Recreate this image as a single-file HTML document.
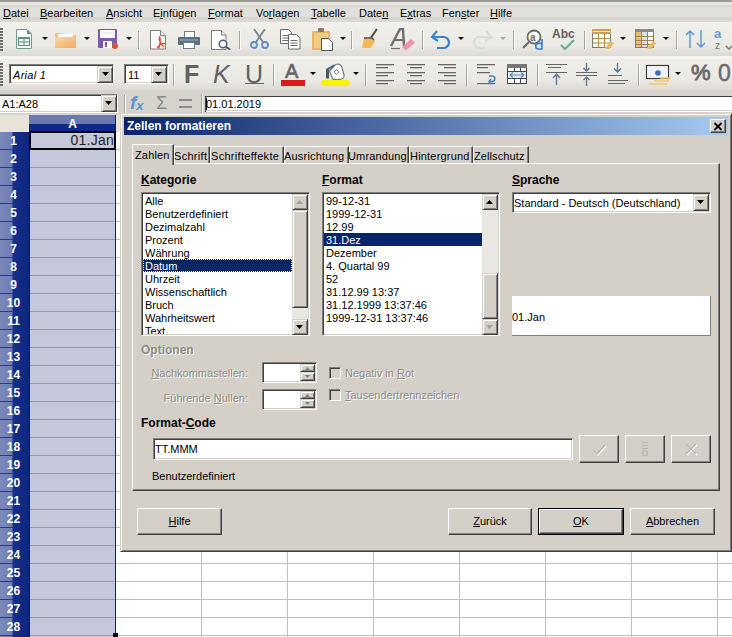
<!DOCTYPE html><html><head><meta charset="utf-8"><style>
*{box-sizing:border-box;margin:0;padding:0}
html,body{width:732px;height:637px;overflow:hidden;background:#fff;position:relative;font-family:"Liberation Sans",sans-serif;font-size:11px;color:#000}
div,svg{position:absolute}
.t{white-space:nowrap;line-height:13px}
.u{text-decoration:underline}
.raised{background:#d4d0c8;border:1px solid;border-color:#fff #404040 #404040 #fff;box-shadow:inset -1px -1px #808080}
.sunken{background:#fff;border:1px solid;border-color:#808080 #fff #fff #808080;box-shadow:inset 1px 1px #404040,inset -1px -1px #d4d0c8}
.sep{width:2px;border-left:1px solid #a8a6a0;border-right:1px solid #fbfaf7}
.dd{width:0;height:0;border-left:3px solid transparent;border-right:3px solid transparent;border-top:3px solid #000}
.dis{color:#8c8a86;text-shadow:1px 1px #fff}
.sb{background:#d4d0c8;border:1px solid;border-color:#d4d0c8 #404040 #404040 #d4d0c8;box-shadow:inset 1px 1px #fff,inset -1px -1px #808080}
.li{position:absolute;white-space:nowrap;line-height:13px;height:13px}
</style></head><body>
<div style="left:0;top:0;width:732px;height:2px;background:#9a9a96"></div>
<div style="left:0;top:2px;width:732px;height:20px;background:linear-gradient(#e5e4e0 0,#e5e4e0 3px,#d8d7d2 3px,#d8d7d2 5px,#e0dfdb 5px,#e0dfdb 15px,#d5d4cf 15px,#d5d4cf 18px,#dad9d4 18px)"></div>
<div style="left:0;top:22px;width:732px;height:34px;background:linear-gradient(#f1f0eb 0,#ebe9e4 70%,#dcd9d2 100%)"></div>
<div style="left:0;top:56px;width:732px;height:3px;background:#f6f5f1"></div>
<div style="left:0;top:59px;width:732px;height:31px;background:linear-gradient(#efeee9 0,#eae8e3 70%,#dedbd4 100%)"></div>
<div style="left:0;top:90px;width:732px;height:25px;background:#d6d3cc"></div>
<div class="t" style="left:3px;top:7px"><u>D</u>atei</div>
<div class="t" style="left:40px;top:7px"><u>B</u>earbeiten</div>
<div class="t" style="left:106px;top:7px"><u>A</u>nsicht</div>
<div class="t" style="left:153px;top:7px">E<u>i</u>nfügen</div>
<div class="t" style="left:208px;top:7px"><u>F</u>ormat</div>
<div class="t" style="left:256px;top:7px">Vo<u>r</u>lagen</div>
<div class="t" style="left:311px;top:7px"><u>T</u>abelle</div>
<div class="t" style="left:359px;top:7px">Date<u>n</u></div>
<div class="t" style="left:400px;top:7px">E<u>x</u>tras</div>
<div class="t" style="left:442px;top:7px">Fen<u>s</u>ter</div>
<div class="t" style="left:490px;top:7px"><u>H</u>ilfe</div>
<div style="left:0;top:28px;width:3px;height:2px;background:#6e6e6c"></div>
<div style="left:0;top:31px;width:3px;height:2px;background:#6e6e6c"></div>
<div style="left:0;top:34px;width:3px;height:2px;background:#6e6e6c"></div>
<div style="left:0;top:37px;width:3px;height:2px;background:#6e6e6c"></div>
<div style="left:0;top:40px;width:3px;height:2px;background:#6e6e6c"></div>
<div style="left:0;top:43px;width:3px;height:2px;background:#6e6e6c"></div>
<div style="left:0;top:46px;width:3px;height:2px;background:#6e6e6c"></div>
<div style="left:0;top:49px;width:3px;height:2px;background:#6e6e6c"></div>
<div style="left:0;top:63px;width:3px;height:2px;background:#6e6e6c"></div>
<div style="left:0;top:66px;width:3px;height:2px;background:#6e6e6c"></div>
<div style="left:0;top:69px;width:3px;height:2px;background:#6e6e6c"></div>
<div style="left:0;top:72px;width:3px;height:2px;background:#6e6e6c"></div>
<div style="left:0;top:75px;width:3px;height:2px;background:#6e6e6c"></div>
<div style="left:0;top:78px;width:3px;height:2px;background:#6e6e6c"></div>
<div style="left:0;top:81px;width:3px;height:2px;background:#6e6e6c"></div>
<div style="left:0;top:84px;width:3px;height:2px;background:#6e6e6c"></div>
<svg style="left:16px;top:29px" width="17" height="21" viewBox="0 0 17 21"><path d="M0.5 0.5h10.5l4.5 4.5v14.5h-15z" fill="#fbfdfc" stroke="#6e9c8c"/><path d="M11 0.5l4.5 4.5h-4.5z" fill="#5f8f7d"/><rect x="2.5" y="8.5" width="11" height="8" fill="#eef6f2" stroke="#5f8f7d"/><rect x="2" y="8" width="12" height="2" fill="#5f8f7d"/><path d="M2.5 13h11M8 10v6.5" stroke="#5f8f7d"/></svg>
<div class="dd" style="left:42px;top:37px"></div>
<svg style="left:55px;top:32px" width="22" height="17" viewBox="0 0 22 17"><defs><linearGradient id="fg" x1="0" y1="0" x2="1" y2="1"><stop offset="0" stop-color="#f8dca0"/><stop offset="1" stop-color="#f0a868"/></linearGradient></defs><path d="M0 1h7l2 2h12v13H0z" fill="#efc383"/><rect x="3" y="2" width="15" height="6" fill="#fff"/><path d="M0 5h21v11H0z" fill="url(#fg)"/></svg>
<div class="dd" style="left:84px;top:37px"></div>
<svg style="left:98px;top:29px" width="21" height="20" viewBox="0 0 21 20"><rect x="0" y="0" width="19" height="19" rx="1" fill="#7b5aa6"/><rect x="2" y="1" width="15" height="8" fill="#fbf9fd"/><path d="M3 4h13" stroke="#e6dcef"/><rect x="5" y="12" width="9" height="7" fill="#fbf9fd"/><rect x="7" y="13" width="2" height="5" fill="#7b5aa6"/><circle cx="17" cy="17" r="3" fill="#d9553a"/></svg>
<div class="dd" style="left:126px;top:37px"></div>
<div class="sep" style="left:138px;top:31px;height:18px"></div>
<svg style="left:150px;top:30px" width="19" height="20" viewBox="0 0 19 20"><path d="M0.5 0.5h10l5 5v13.5h-15z" fill="#fff" stroke="#7d7d7d"/><path d="M10.5 0.5v5h5" fill="#f2f2f2" stroke="#7d7d7d"/><path d="M10 6c-1.5 3-0.5 7 4 11M7 18c2-3 5-5 9-4.5M8.5 18.5c1.5-3 2-7 1.5-11" stroke="#e04a2a" stroke-width="1.3" fill="none"/></svg>
<svg style="left:178px;top:31px" width="22" height="18" viewBox="0 0 22 18"><rect x="6.5" y="0.5" width="10" height="6" fill="#fff" stroke="#6d7f8e"/><rect x="0" y="6" width="22" height="8" rx="1" fill="#5d7080"/><rect x="2" y="8" width="18" height="2" fill="#7f93a3"/><rect x="5.5" y="11.5" width="11" height="6" fill="#fff" stroke="#6d7f8e"/></svg>
<svg style="left:211px;top:30px" width="21" height="20" viewBox="0 0 21 20"><path d="M0.5 0.5h10l4.5 4.5v14.5h-14.5z" fill="#fff" stroke="#7d7d7d"/><path d="M10.5 0.5v4.5h4.5" fill="#f2f2f2" stroke="#7d7d7d"/><circle cx="12" cy="14" r="3.8" fill="#f4f8fb" stroke="#4d5f70" stroke-width="1.5"/><path d="M14.8 16.8l4.5 3" stroke="#4d5f70" stroke-width="1.8"/></svg>
<div class="sep" style="left:239px;top:31px;height:18px"></div>
<svg style="left:249px;top:29px" width="21" height="21" viewBox="0 0 21 21"><path d="M5 0l9 13M16 0L7 13" stroke="#77828c" stroke-width="1.8"/><circle cx="5" cy="16" r="3" fill="none" stroke="#5d8ec4" stroke-width="1.8"/><circle cx="16" cy="16" r="3" fill="none" stroke="#5d8ec4" stroke-width="1.8"/></svg>
<svg style="left:280px;top:29px" width="21" height="21" viewBox="0 0 21 21"><path d="M0.5 0.5h8l3 3v11h-11z" fill="#fff" stroke="#6a6a6a"/><path d="M2.5 6.5h6M2.5 9h6M2.5 11.5h6" stroke="#6a6a6a"/><path d="M8.5 5.5h8l3.5 3.5v11h-11.5z" fill="#fff" stroke="#6a6a6a"/><path d="M10.5 11.5h7M10.5 14h7M10.5 16.5h7" stroke="#6a6a6a"/></svg>
<svg style="left:312px;top:28px" width="23" height="23" viewBox="0 0 23 23"><rect x="0" y="3" width="18" height="19" fill="#e6b864"/><path d="M2 5h14v15H2z" fill="#efcb86"/><rect x="6" y="0" width="6" height="4" rx="1" fill="#8a7a60"/><path d="M9.5 10.5h7l4 4v8h-11z" fill="#fff" stroke="#555"/></svg>
<div class="dd" style="left:340px;top:37px"></div>
<div class="sep" style="left:351px;top:31px;height:18px"></div>
<svg style="left:361px;top:28px" width="18" height="21" viewBox="0 0 18 21"><path d="M16 1L9 11" stroke="#4a4a4a" stroke-width="2"/><path d="M3 10l7 0 4 3-4 7H1z" fill="#f2b95a"/><path d="M3 10h8l2 2" fill="none" stroke="#555" stroke-width="1.6"/></svg>
<svg style="left:389px;top:28px" width="27" height="22" viewBox="0 0 27 22"><path d="M2 18L11 1h3l1 17" fill="none" stroke="#6f6f6f" stroke-width="2.4"/><path d="M6 12h9" stroke="#6f6f6f" stroke-width="2"/><path d="M2 20.5h9" stroke="#6f6f6f" stroke-width="1.2"/><path d="M13 19l9-8 4 3.5-9 8z" fill="#f090b0"/></svg>
<div class="sep" style="left:422px;top:31px;height:18px"></div>
<svg style="left:430px;top:29px" width="23" height="21" viewBox="0 0 23 21"><path d="M7 2L2 8l6 4" fill="none" stroke="#3a82cc" stroke-width="2.2"/><path d="M2.5 8h11a5.5 5.5 0 0 1 0 11H7" fill="none" stroke="#3a82cc" stroke-width="2.2"/></svg>
<div class="dd" style="left:458px;top:37px"></div>
<svg style="left:471px;top:29px" width="22" height="21" viewBox="0 0 22 21"><path d="M15 2l5 6-6 4" fill="none" stroke="#dcdad4" stroke-width="2.2"/><path d="M19.5 8h-11a5.5 5.5 0 0 0 0 11H14" fill="none" stroke="#dcdad4" stroke-width="2.2"/></svg>
<div class="dd" style="left:500px;top:37px;border-top-color:#a8a6a0"></div>
<div class="sep" style="left:513px;top:31px;height:18px"></div>
<svg style="left:521px;top:28px" width="24" height="23" viewBox="0 0 24 23"><circle cx="13" cy="9" r="6.5" fill="#fff" stroke="#6a6a6a" stroke-width="1.8"/><text x="9" y="13" font-family="Liberation Sans" font-size="10" font-weight="bold" fill="#6a6a6a">a</text><path d="M8 14L2 20" stroke="#6a6a6a" stroke-width="2.2"/><path d="M21 11v10.5M21 21h-3.5a2.8 2.8 0 0 1 0-5.6H21" fill="#dbe8f5" stroke="#3f7fc4" stroke-width="1.6"/></svg>
<svg style="left:552px;top:27px" width="26" height="24" viewBox="0 0 26 24"><text x="0" y="11" font-family="Liberation Sans" font-weight="bold" font-size="12" fill="#5e5e5e">Abc</text><path d="M9 18l4 4 9-9" fill="none" stroke="#68ae90" stroke-width="2.2"/></svg>
<div class="sep" style="left:584px;top:31px;height:18px"></div>
<svg style="left:592px;top:29px" width="23" height="20" viewBox="0 0 23 20"><rect x="0.5" y="0.5" width="18" height="18" fill="#fff" stroke="#7a7a7a"/><rect x="0" y="0" width="19" height="5" fill="#caa055"/><path d="M0.5 2.5h18" stroke="#f4e4c0"/><path d="M0.5 9.5h18M0.5 14h18M6.5 5v14M12.5 5v14" stroke="#b08a48"/><path d="M13 19l6-7 3 2.5-6 7z" fill="#e8b860"/></svg>
<div class="dd" style="left:620px;top:37px"></div>
<svg style="left:635px;top:29px" width="22" height="20" viewBox="0 0 22 20"><rect x="0.5" y="0.5" width="18" height="18" fill="#fff" stroke="#7a7a7a"/><rect x="0" y="0" width="19" height="3" fill="#8a8a8a"/><rect x="1" y="3" width="11" height="15" fill="#e6c078"/><rect x="7" y="3" width="5" height="15" fill="#cfe4f4"/><path d="M0.5 7.5h18M0.5 11.5h18M0.5 15.5h18M6.5 3v16M12.5 3v16" stroke="#a8843e"/><path d="M12 19l6-7 3 2.5-6 7z" fill="#e8b860"/></svg>
<div class="dd" style="left:663px;top:37px"></div>
<div class="sep" style="left:676px;top:31px;height:18px"></div>
<svg style="left:685px;top:29px" width="22" height="20" viewBox="0 0 22 20"><path d="M5 19V2M1 6l4-4 4 4" fill="none" stroke="#5d9ad6" stroke-width="1.5"/><path d="M16 1v17M12 14l4 4 4-4" fill="none" stroke="#5d9ad6" stroke-width="1.5"/></svg>
<svg style="left:713px;top:27px" width="19" height="24" viewBox="0 0 19 24"><text x="1" y="11" font-family="Liberation Sans" font-size="13" font-weight="bold" fill="#5d9ad6">a</text><text x="2" y="22" font-family="Liberation Sans" font-size="10" fill="#777">z</text><path d="M13 19l3 3 3-3" fill="none" stroke="#777" stroke-width="1.4"/></svg>
<div class="sunken" style="left:9px;top:64px;width:105px;height:20px"></div>
<div class="t" style="left:13px;top:69px;font-style:italic;letter-spacing:0.3px">Arial 1</div>
<div class="sb" style="left:97px;top:66px;width:16px;height:17px"></div>
<svg style="left:102px;top:72px" width="7" height="4"><polygon points="0,0 7,0 3.5,4" fill="#000"/></svg>
<div class="sunken" style="left:124px;top:64px;width:45px;height:20px"></div>
<div class="t" style="left:128px;top:69px">11</div>
<div class="sb" style="left:151px;top:66px;width:16px;height:17px"></div>
<svg style="left:155px;top:72px" width="7" height="4"><polygon points="0,0 7,0 3.5,4" fill="#000"/></svg>
<div class="sep" style="left:173px;top:64px;height:22px"></div>
<div class="t" style="left:184px;top:60px;font-size:25px;line-height:28px;font-weight:bold;color:#626262">F</div>
<div class="t" style="left:213px;top:60px;font-size:25px;line-height:28px;font-style:italic;color:#626262">K</div>
<div class="t" style="left:245px;top:60px;font-size:25px;line-height:28px;color:#626262">U</div>
<div style="left:245px;top:83px;width:19px;height:1px;background:#626262"></div>
<div class="sep" style="left:273px;top:64px;height:22px"></div>
<div class="t" style="left:285px;top:60px;font-size:20px;line-height:22px;color:#666;-webkit-text-stroke:0.6px #666">A</div>
<div style="left:281px;top:80px;width:24px;height:6px;background:#d81c1c"></div>
<div class="dd" style="left:310px;top:72px"></div>
<svg style="left:324px;top:63px" width="22" height="17" viewBox="0 0 22 17"><path d="M2 6L6 1h6v6z" fill="#d5e6f4"/><path d="M11.5 1.5c3-1 5.5 0 6.5 3l2 7.5c0.5 3-2 4.5-5 4.5H9L5.5 8z" fill="#fff" stroke="#7a7a7a" stroke-width="1.2"/><path d="M12.5 6.5l2.5 2.5-2.5 2.5-2.5-2.5z" fill="none" stroke="#888"/><path d="M3.5 6v9.5" stroke="#44546a" stroke-width="3"/><path d="M3 6.5l7-4" stroke="#44546a" stroke-width="1.6"/></svg>
<div style="left:321px;top:80px;width:29px;height:6px;background:#f6f200;border-radius:3px"></div>
<div class="dd" style="left:353px;top:72px"></div>
<div class="sep" style="left:365px;top:64px;height:22px"></div>
<div style="left:376px;top:64px;width:18px;height:1px;background:#666"></div>
<div style="left:376px;top:65px;width:18px;height:1px;background:#c8c6c0"></div>
<div style="left:376px;top:67px;width:12px;height:1px;background:#666"></div>
<div style="left:376px;top:68px;width:12px;height:1px;background:#c8c6c0"></div>
<div style="left:376px;top:72px;width:18px;height:1px;background:#666"></div>
<div style="left:376px;top:73px;width:18px;height:1px;background:#c8c6c0"></div>
<div style="left:376px;top:75px;width:12px;height:1px;background:#666"></div>
<div style="left:376px;top:76px;width:12px;height:1px;background:#c8c6c0"></div>
<div style="left:376px;top:80px;width:18px;height:1px;background:#666"></div>
<div style="left:376px;top:81px;width:18px;height:1px;background:#c8c6c0"></div>
<div style="left:376px;top:83px;width:12px;height:1px;background:#666"></div>
<div style="left:376px;top:84px;width:12px;height:1px;background:#c8c6c0"></div>
<div style="left:407px;top:64px;width:18px;height:1px;background:#666"></div>
<div style="left:407px;top:65px;width:18px;height:1px;background:#c8c6c0"></div>
<div style="left:410px;top:67px;width:12px;height:1px;background:#666"></div>
<div style="left:410px;top:68px;width:12px;height:1px;background:#c8c6c0"></div>
<div style="left:407px;top:72px;width:18px;height:1px;background:#666"></div>
<div style="left:407px;top:73px;width:18px;height:1px;background:#c8c6c0"></div>
<div style="left:410px;top:75px;width:12px;height:1px;background:#666"></div>
<div style="left:410px;top:76px;width:12px;height:1px;background:#c8c6c0"></div>
<div style="left:407px;top:80px;width:18px;height:1px;background:#666"></div>
<div style="left:407px;top:81px;width:18px;height:1px;background:#c8c6c0"></div>
<div style="left:410px;top:83px;width:12px;height:1px;background:#666"></div>
<div style="left:410px;top:84px;width:12px;height:1px;background:#c8c6c0"></div>
<div style="left:438px;top:64px;width:18px;height:1px;background:#666"></div>
<div style="left:438px;top:65px;width:18px;height:1px;background:#c8c6c0"></div>
<div style="left:444px;top:67px;width:12px;height:1px;background:#666"></div>
<div style="left:444px;top:68px;width:12px;height:1px;background:#c8c6c0"></div>
<div style="left:438px;top:72px;width:18px;height:1px;background:#666"></div>
<div style="left:438px;top:73px;width:18px;height:1px;background:#c8c6c0"></div>
<div style="left:444px;top:75px;width:12px;height:1px;background:#666"></div>
<div style="left:444px;top:76px;width:12px;height:1px;background:#c8c6c0"></div>
<div style="left:438px;top:80px;width:18px;height:1px;background:#666"></div>
<div style="left:438px;top:81px;width:18px;height:1px;background:#c8c6c0"></div>
<div style="left:444px;top:83px;width:12px;height:1px;background:#666"></div>
<div style="left:444px;top:84px;width:12px;height:1px;background:#c8c6c0"></div>
<div class="sep" style="left:466px;top:64px;height:22px"></div>
<svg style="left:476px;top:63px" width="21" height="23" viewBox="0 0 21 23"><path d="M1 1.5h18M1 4.5h11M1 9.5h13M1 20.5h18" stroke="#666" stroke-width="1"/><path d="M1 2.5h18M1 5.5h11M1 10.5h13M1 21.5h18" stroke="#ccc" stroke-width="1"/><path d="M13 13h3a2.8 2.8 0 0 1 0 5.6h-2M15 16l-2 2.6 2 2.6" fill="none" stroke="#4a7fc0" stroke-width="1.5"/></svg>
<svg style="left:506px;top:63px" width="22" height="22" viewBox="0 0 22 22"><rect x="1.5" y="1.5" width="19" height="19" fill="#fff" stroke="#444"/><rect x="1" y="1" width="20" height="4" fill="#777"/><rect x="2" y="9" width="18" height="6" fill="#e2eef8"/><path d="M1.5 8.5h19M1.5 15.5h19M8.5 5v4M14.5 5v4M8.5 15v6M14.5 15v6" stroke="#444"/><path d="M4 12h14M4 12l3-2.5M4 12l3 2.5M18 12l-3-2.5M18 12l-3 2.5" stroke="#5a8cc8" stroke-width="1.2" fill="none"/></svg>
<div class="sep" style="left:537px;top:64px;height:22px"></div>
<svg style="left:546px;top:63px" width="22" height="23" viewBox="0 0 22 23"><path d="M0 1.5h21M2 4.5h13M0 9.5h21" stroke="#666"/><path d="M10.5 22V11M7 15l3.5-4 3.5 4" fill="none" stroke="#5a7a98" stroke-width="1.4"/></svg>
<svg style="left:576px;top:63px" width="22" height="23" viewBox="0 0 22 23"><path d="M0 9.5h21M0 12.5h21" stroke="#666"/><path d="M10.5 0v8M7.5 5l3 3 3-3M10.5 23v-9M7.5 17l3-3 3 3" fill="none" stroke="#5a7a98" stroke-width="1.4"/></svg>
<svg style="left:607px;top:63px" width="22" height="23" viewBox="0 0 22 23"><path d="M1 12.5h14M1 17.5h20M1 20.5h17" stroke="#666"/><path d="M10.5 0v9M7 5.5l3.5 3.5 3.5-3.5" fill="none" stroke="#5a7a98" stroke-width="1.4"/></svg>
<div class="sep" style="left:638px;top:64px;height:22px"></div>
<svg style="left:645px;top:63px" width="27" height="23" viewBox="0 0 27 23"><rect x="1.5" y="2.5" width="22" height="13" fill="#fff" stroke="#3a3a3a" stroke-width="1.2"/><rect x="3" y="4" width="19" height="10" fill="#eef3fa"/><circle cx="13" cy="10" r="2.8" fill="#3f6fae"/><path d="M15 15h11M9 18h15M4 21h18" stroke="#f2c66a" stroke-width="1.4"/></svg>
<div class="dd" style="left:675px;top:72px"></div>
<div class="t" style="left:691px;top:61px;font-size:22px;line-height:24px;color:#6a6a6a;-webkit-text-stroke:0.9px #6a6a6a">%</div>
<div class="t" style="left:718px;top:61px;font-size:23px;line-height:24px;color:#6a6a6a;-webkit-text-stroke:0.5px #6a6a6a">0,</div>
<div class="sunken" style="left:-2px;top:94px;width:120px;height:19px"></div>
<div class="t" style="left:2px;top:98px">A1:A28</div>
<div class="sb" style="left:101px;top:95px;width:16px;height:17px"></div>
<svg style="left:105px;top:101px" width="7" height="4"><polygon points="0,0 7,0 3.5,4" fill="#000"/></svg>
<div class="sep" style="left:124px;top:95px;height:18px"></div>
<div class="t" style="left:130px;top:93px;font-size:19px;line-height:20px;font-style:italic;font-weight:bold;color:#5b95cf">f<span style="font-size:13px;position:relative;top:1px">x</span></div>
<div class="t" style="left:156px;top:93px;font-size:18px;line-height:20px;color:#888">&#931;</div>
<div style="left:179px;top:99px;width:13px;height:2px;background:#8a8a8a"></div>
<div style="left:179px;top:106px;width:13px;height:2px;background:#8a8a8a"></div>
<div class="sep" style="left:201px;top:95px;height:18px"></div>
<div style="left:205px;top:96px;width:540px;height:16px;background:#fff;border-top:1px solid #404040;border-left:1px solid #404040"></div>
<div style="left:206px;top:98px;width:1px;height:12px;background:#000"></div>
<div style="left:206px;top:110px;width:526px;height:1px;background:#d4d0c8"></div>
<div class="t" style="left:206px;top:98px">01.01.2019</div>
<div style="left:0;top:115px;width:29px;height:17px;background:#e7e3d8"></div>
<div style="left:29px;top:115px;width:87px;height:17px;background:linear-gradient(#6b79b1 0,#6b79b1 50%,#0c2a8a 50%,#0c2a8a 100%)"></div>
<div class="t" style="left:29px;top:118px;width:87px;text-align:center;color:#fff;font-weight:bold;font-size:12px">A</div>
<div style="left:116px;top:115px;width:6px;height:17px;background:#e7e3d8"></div>
<div style="left:0;top:132px;width:29px;height:505px;background:linear-gradient(90deg,#7c8aba 0,#6e7cb4 12px,#14308a 13px,#0d2680 100%)"></div>
<div style="left:29px;top:132px;width:1px;height:505px;background:#0a1a5a"></div>
<div style="left:30px;top:132px;width:85px;height:505px;background:#c5c8db"></div>
<div style="left:115px;top:115px;width:1px;height:522px;background:#0c2070"></div>
<div style="left:0;top:149px;width:13px;height:1px;background:#2a3a80"></div>
<div style="left:30px;top:149px;width:85px;height:1px;background:#9698b0"></div>
<div class="t" style="left:-1px;top:135px;width:29px;text-align:center;color:#fff;font-weight:bold;font-size:12px">1</div>
<div style="left:0;top:167px;width:13px;height:1px;background:#2a3a80"></div>
<div style="left:30px;top:167px;width:85px;height:1px;background:#9698b0"></div>
<div class="t" style="left:-1px;top:153px;width:29px;text-align:center;color:#fff;font-weight:bold;font-size:12px">2</div>
<div style="left:0;top:185px;width:13px;height:1px;background:#2a3a80"></div>
<div style="left:30px;top:185px;width:85px;height:1px;background:#9698b0"></div>
<div class="t" style="left:-1px;top:171px;width:29px;text-align:center;color:#fff;font-weight:bold;font-size:12px">3</div>
<div style="left:0;top:203px;width:13px;height:1px;background:#2a3a80"></div>
<div style="left:30px;top:203px;width:85px;height:1px;background:#9698b0"></div>
<div class="t" style="left:-1px;top:189px;width:29px;text-align:center;color:#fff;font-weight:bold;font-size:12px">4</div>
<div style="left:0;top:221px;width:13px;height:1px;background:#2a3a80"></div>
<div style="left:30px;top:221px;width:85px;height:1px;background:#9698b0"></div>
<div class="t" style="left:-1px;top:207px;width:29px;text-align:center;color:#fff;font-weight:bold;font-size:12px">5</div>
<div style="left:0;top:239px;width:13px;height:1px;background:#2a3a80"></div>
<div style="left:30px;top:239px;width:85px;height:1px;background:#9698b0"></div>
<div class="t" style="left:-1px;top:225px;width:29px;text-align:center;color:#fff;font-weight:bold;font-size:12px">6</div>
<div style="left:0;top:257px;width:13px;height:1px;background:#2a3a80"></div>
<div style="left:30px;top:257px;width:85px;height:1px;background:#9698b0"></div>
<div class="t" style="left:-1px;top:243px;width:29px;text-align:center;color:#fff;font-weight:bold;font-size:12px">7</div>
<div style="left:0;top:275px;width:13px;height:1px;background:#2a3a80"></div>
<div style="left:30px;top:275px;width:85px;height:1px;background:#9698b0"></div>
<div class="t" style="left:-1px;top:261px;width:29px;text-align:center;color:#fff;font-weight:bold;font-size:12px">8</div>
<div style="left:0;top:293px;width:13px;height:1px;background:#2a3a80"></div>
<div style="left:30px;top:293px;width:85px;height:1px;background:#9698b0"></div>
<div class="t" style="left:-1px;top:279px;width:29px;text-align:center;color:#fff;font-weight:bold;font-size:12px">9</div>
<div style="left:0;top:311px;width:13px;height:1px;background:#2a3a80"></div>
<div style="left:30px;top:311px;width:85px;height:1px;background:#9698b0"></div>
<div class="t" style="left:-1px;top:297px;width:29px;text-align:center;color:#fff;font-weight:bold;font-size:12px">10</div>
<div style="left:0;top:329px;width:13px;height:1px;background:#2a3a80"></div>
<div style="left:30px;top:329px;width:85px;height:1px;background:#9698b0"></div>
<div class="t" style="left:-1px;top:315px;width:29px;text-align:center;color:#fff;font-weight:bold;font-size:12px">11</div>
<div style="left:0;top:347px;width:13px;height:1px;background:#2a3a80"></div>
<div style="left:30px;top:347px;width:85px;height:1px;background:#9698b0"></div>
<div class="t" style="left:-1px;top:333px;width:29px;text-align:center;color:#fff;font-weight:bold;font-size:12px">12</div>
<div style="left:0;top:365px;width:13px;height:1px;background:#2a3a80"></div>
<div style="left:30px;top:365px;width:85px;height:1px;background:#9698b0"></div>
<div class="t" style="left:-1px;top:351px;width:29px;text-align:center;color:#fff;font-weight:bold;font-size:12px">13</div>
<div style="left:0;top:383px;width:13px;height:1px;background:#2a3a80"></div>
<div style="left:30px;top:383px;width:85px;height:1px;background:#9698b0"></div>
<div class="t" style="left:-1px;top:369px;width:29px;text-align:center;color:#fff;font-weight:bold;font-size:12px">14</div>
<div style="left:0;top:401px;width:13px;height:1px;background:#2a3a80"></div>
<div style="left:30px;top:401px;width:85px;height:1px;background:#9698b0"></div>
<div class="t" style="left:-1px;top:387px;width:29px;text-align:center;color:#fff;font-weight:bold;font-size:12px">15</div>
<div style="left:0;top:419px;width:13px;height:1px;background:#2a3a80"></div>
<div style="left:30px;top:419px;width:85px;height:1px;background:#9698b0"></div>
<div class="t" style="left:-1px;top:405px;width:29px;text-align:center;color:#fff;font-weight:bold;font-size:12px">16</div>
<div style="left:0;top:437px;width:13px;height:1px;background:#2a3a80"></div>
<div style="left:30px;top:437px;width:85px;height:1px;background:#9698b0"></div>
<div class="t" style="left:-1px;top:423px;width:29px;text-align:center;color:#fff;font-weight:bold;font-size:12px">17</div>
<div style="left:0;top:455px;width:13px;height:1px;background:#2a3a80"></div>
<div style="left:30px;top:455px;width:85px;height:1px;background:#9698b0"></div>
<div class="t" style="left:-1px;top:441px;width:29px;text-align:center;color:#fff;font-weight:bold;font-size:12px">18</div>
<div style="left:0;top:473px;width:13px;height:1px;background:#2a3a80"></div>
<div style="left:30px;top:473px;width:85px;height:1px;background:#9698b0"></div>
<div class="t" style="left:-1px;top:459px;width:29px;text-align:center;color:#fff;font-weight:bold;font-size:12px">19</div>
<div style="left:0;top:491px;width:13px;height:1px;background:#2a3a80"></div>
<div style="left:30px;top:491px;width:85px;height:1px;background:#9698b0"></div>
<div class="t" style="left:-1px;top:477px;width:29px;text-align:center;color:#fff;font-weight:bold;font-size:12px">20</div>
<div style="left:0;top:509px;width:13px;height:1px;background:#2a3a80"></div>
<div style="left:30px;top:509px;width:85px;height:1px;background:#9698b0"></div>
<div class="t" style="left:-1px;top:495px;width:29px;text-align:center;color:#fff;font-weight:bold;font-size:12px">21</div>
<div style="left:0;top:527px;width:13px;height:1px;background:#2a3a80"></div>
<div style="left:30px;top:527px;width:85px;height:1px;background:#9698b0"></div>
<div class="t" style="left:-1px;top:513px;width:29px;text-align:center;color:#fff;font-weight:bold;font-size:12px">22</div>
<div style="left:0;top:545px;width:13px;height:1px;background:#2a3a80"></div>
<div style="left:30px;top:545px;width:85px;height:1px;background:#9698b0"></div>
<div class="t" style="left:-1px;top:531px;width:29px;text-align:center;color:#fff;font-weight:bold;font-size:12px">23</div>
<div style="left:0;top:563px;width:13px;height:1px;background:#2a3a80"></div>
<div style="left:30px;top:563px;width:85px;height:1px;background:#9698b0"></div>
<div class="t" style="left:-1px;top:549px;width:29px;text-align:center;color:#fff;font-weight:bold;font-size:12px">24</div>
<div style="left:0;top:581px;width:13px;height:1px;background:#2a3a80"></div>
<div style="left:30px;top:581px;width:85px;height:1px;background:#9698b0"></div>
<div class="t" style="left:-1px;top:567px;width:29px;text-align:center;color:#fff;font-weight:bold;font-size:12px">25</div>
<div style="left:0;top:599px;width:13px;height:1px;background:#2a3a80"></div>
<div style="left:30px;top:599px;width:85px;height:1px;background:#9698b0"></div>
<div class="t" style="left:-1px;top:585px;width:29px;text-align:center;color:#fff;font-weight:bold;font-size:12px">26</div>
<div style="left:0;top:617px;width:13px;height:1px;background:#2a3a80"></div>
<div style="left:30px;top:617px;width:85px;height:1px;background:#9698b0"></div>
<div class="t" style="left:-1px;top:603px;width:29px;text-align:center;color:#fff;font-weight:bold;font-size:12px">27</div>
<div style="left:0;top:635px;width:13px;height:1px;background:#2a3a80"></div>
<div style="left:30px;top:635px;width:85px;height:1px;background:#9698b0"></div>
<div class="t" style="left:-1px;top:621px;width:29px;text-align:center;color:#fff;font-weight:bold;font-size:12px">28</div>
<div style="left:116px;top:563px;width:616px;height:1px;background:#c0c0c0"></div>
<div style="left:116px;top:581px;width:616px;height:1px;background:#c0c0c0"></div>
<div style="left:116px;top:599px;width:616px;height:1px;background:#c0c0c0"></div>
<div style="left:116px;top:617px;width:616px;height:1px;background:#c0c0c0"></div>
<div style="left:116px;top:635px;width:616px;height:1px;background:#c0c0c0"></div>
<div style="left:201px;top:551px;width:1px;height:86px;background:#c0c0c0"></div>
<div style="left:287px;top:551px;width:1px;height:86px;background:#c0c0c0"></div>
<div style="left:373px;top:551px;width:1px;height:86px;background:#c0c0c0"></div>
<div style="left:459px;top:551px;width:1px;height:86px;background:#c0c0c0"></div>
<div style="left:545px;top:551px;width:1px;height:86px;background:#c0c0c0"></div>
<div style="left:631px;top:551px;width:1px;height:86px;background:#c0c0c0"></div>
<div style="left:717px;top:551px;width:1px;height:86px;background:#c0c0c0"></div>
<div style="left:116px;top:149px;width:6px;height:1px;background:#c0c0c0"></div>
<div style="left:116px;top:167px;width:6px;height:1px;background:#c0c0c0"></div>
<div style="left:116px;top:185px;width:6px;height:1px;background:#c0c0c0"></div>
<div style="left:116px;top:203px;width:6px;height:1px;background:#c0c0c0"></div>
<div style="left:116px;top:221px;width:6px;height:1px;background:#c0c0c0"></div>
<div style="left:116px;top:239px;width:6px;height:1px;background:#c0c0c0"></div>
<div style="left:116px;top:257px;width:6px;height:1px;background:#c0c0c0"></div>
<div style="left:116px;top:275px;width:6px;height:1px;background:#c0c0c0"></div>
<div style="left:116px;top:293px;width:6px;height:1px;background:#c0c0c0"></div>
<div style="left:116px;top:311px;width:6px;height:1px;background:#c0c0c0"></div>
<div style="left:116px;top:329px;width:6px;height:1px;background:#c0c0c0"></div>
<div style="left:116px;top:347px;width:6px;height:1px;background:#c0c0c0"></div>
<div style="left:116px;top:365px;width:6px;height:1px;background:#c0c0c0"></div>
<div style="left:116px;top:383px;width:6px;height:1px;background:#c0c0c0"></div>
<div style="left:116px;top:401px;width:6px;height:1px;background:#c0c0c0"></div>
<div style="left:116px;top:419px;width:6px;height:1px;background:#c0c0c0"></div>
<div style="left:116px;top:437px;width:6px;height:1px;background:#c0c0c0"></div>
<div style="left:116px;top:455px;width:6px;height:1px;background:#c0c0c0"></div>
<div style="left:116px;top:473px;width:6px;height:1px;background:#c0c0c0"></div>
<div style="left:116px;top:491px;width:6px;height:1px;background:#c0c0c0"></div>
<div style="left:116px;top:509px;width:6px;height:1px;background:#c0c0c0"></div>
<div style="left:116px;top:527px;width:6px;height:1px;background:#c0c0c0"></div>
<div style="left:116px;top:545px;width:6px;height:1px;background:#c0c0c0"></div>
<div style="left:116px;top:563px;width:6px;height:1px;background:#c0c0c0"></div>
<div style="left:116px;top:581px;width:6px;height:1px;background:#c0c0c0"></div>
<div style="left:116px;top:599px;width:6px;height:1px;background:#c0c0c0"></div>
<div style="left:116px;top:617px;width:6px;height:1px;background:#c0c0c0"></div>
<div style="left:116px;top:635px;width:6px;height:1px;background:#c0c0c0"></div>
<div style="left:29px;top:131px;width:87px;height:19px;border:2px solid #000"></div>
<div class="t" style="left:60px;top:132px;width:54px;text-align:right;font-size:14px;line-height:16px;color:#222;letter-spacing:0.25px">01.Jan</div>
<div style="left:113px;top:633px;width:5px;height:4px;background:#000"></div>
<div style="left:120px;top:113px;width:612px;height:439px;background:#d4d0c8;border:1px solid;border-color:#d4d0c8 #404040 #404040 #d4d0c8;box-shadow:inset 1px 1px #fff,inset -1px -1px #808080"></div>
<div style="left:124px;top:117px;width:604px;height:18px;background:linear-gradient(90deg,#0a246a 0,#a6caf0 100%)"></div>
<div class="t" style="left:127px;top:119px;color:#fff;font-weight:bold;font-size:12px;line-height:14px">Zellen formatieren</div>
<div class="raised" style="left:710px;top:119px;width:16px;height:14px"></div>
<svg style="left:713px;top:122px" width="11" height="9" viewBox="0 0 11 9"><path d="M1.5 1l7 7M8.5 1l-7 7" stroke="#000" stroke-width="1.8"/></svg>
<div style="left:132px;top:163px;width:588px;height:328px;border:1px solid;border-color:#fff #404040 #404040 #fff;box-shadow:inset -1px -1px #808080"></div>
<div style="left:132px;top:144px;width:42px;height:21px;background:#d4d0c8;border-left:1px solid #fff;border-top:1px solid #fff;border-right:1px solid #404040;box-shadow:inset -1px 0 #808080"></div>
<div class="t" style="left:135px;top:149px;letter-spacing:0.15px">Zahlen</div>
<div style="left:174px;top:146px;width:36px;height:17px;background:#d4d0c8;border-top:1px solid #fff;border-left:1px solid #fff;border-right:1px solid #404040;box-shadow:inset -1px 0 #808080"></div>
<div class="t" style="left:174px;top:150px;letter-spacing:0.3px">Schrift</div>
<div style="left:210px;top:146px;width:74px;height:17px;background:#d4d0c8;border-top:1px solid #fff;border-left:1px solid #fff;border-right:1px solid #404040;box-shadow:inset -1px 0 #808080"></div>
<div class="t" style="left:211px;top:150px;letter-spacing:0.3px">Schrifteffekte</div>
<div style="left:284px;top:146px;width:65px;height:17px;background:#d4d0c8;border-top:1px solid #fff;border-left:1px solid #fff;border-right:1px solid #404040;box-shadow:inset -1px 0 #808080"></div>
<div class="t" style="left:284px;top:150px;letter-spacing:0.2px">Ausrichtung</div>
<div style="left:349px;top:146px;width:60px;height:17px;background:#d4d0c8;border-top:1px solid #fff;border-left:1px solid #fff;border-right:1px solid #404040;box-shadow:inset -1px 0 #808080"></div>
<div class="t" style="left:348px;top:150px;letter-spacing:0.15px">Umrandung</div>
<div style="left:409px;top:146px;width:64px;height:17px;background:#d4d0c8;border-top:1px solid #fff;border-left:1px solid #fff;border-right:1px solid #404040;box-shadow:inset -1px 0 #808080"></div>
<div class="t" style="left:410px;top:150px;letter-spacing:0.2px">Hintergrund</div>
<div style="left:473px;top:146px;width:56px;height:17px;background:#d4d0c8;border-top:1px solid #fff;border-left:1px solid #fff;border-right:1px solid #404040;box-shadow:inset -1px 0 #808080"></div>
<div class="t" style="left:474px;top:150px;letter-spacing:0.1px">Zellschutz</div>
<div class="t" style="left:141px;top:174px;font-weight:bold;font-size:12px;"><u>K</u>ategorie</div>
<div class="t" style="left:322px;top:174px;font-weight:bold;font-size:12px;"><u>F</u>ormat</div>
<div class="t" style="left:512px;top:174px;font-weight:bold;font-size:12px;"><u>S</u>prache</div>
<div class="sunken" style="left:141px;top:192px;width:169px;height:144px"></div>
<div style="left:143px;top:194px;width:149px;height:140px;overflow:hidden">
<div class="li" style="left:2px;top:1px">Alle</div>
<div class="li" style="left:2px;top:14px">Benutzerdefiniert</div>
<div class="li" style="left:2px;top:27px">Dezimalzahl</div>
<div class="li" style="left:2px;top:40px">Prozent</div>
<div class="li" style="left:2px;top:53px">Währung</div>
<div style="left:0;top:65px;width:149px;height:13px;background:#0a246a;outline:1px dotted #fff;outline-offset:-1px"></div>
<div class="li" style="left:2px;top:66px;color:#fff">Datum</div>
<div class="li" style="left:2px;top:79px">Uhrzeit</div>
<div class="li" style="left:2px;top:92px">Wissenschaftlich</div>
<div class="li" style="left:2px;top:105px">Bruch</div>
<div class="li" style="left:2px;top:118px">Wahrheitswert</div>
<div class="li" style="left:2px;top:131px">Text</div>
</div>
<div style="left:292px;top:194px;width:16px;height:140px;background:#e9e7e2"></div>
<div class="sb" style="left:292px;top:194px;width:16px;height:16px"></div>
<svg style="left:296px;top:200px" width="7" height="4"><polygon points="0,4 7,4 3.5,0" fill="#a0a0a0"/></svg>
<div class="sb" style="left:292px;top:210px;width:16px;height:98px"></div>
<div class="sb" style="left:292px;top:319px;width:16px;height:16px"></div>
<svg style="left:296px;top:325px" width="7" height="4"><polygon points="0,0 7,0 3.5,4" fill="#000"/></svg>
<div class="sunken" style="left:322px;top:192px;width:178px;height:144px"></div>
<div style="left:324px;top:194px;width:158px;height:140px;overflow:hidden">
<div class="li" style="left:2px;top:1px">99-12-31</div>
<div class="li" style="left:2px;top:14px">1999-12-31</div>
<div class="li" style="left:2px;top:27px">12.99</div>
<div style="left:0;top:39px;width:158px;height:13px;background:#0a246a"></div>
<div class="li" style="left:2px;top:40px;color:#fff">31.Dez</div>
<div class="li" style="left:2px;top:53px">Dezember</div>
<div class="li" style="left:2px;top:66px">4. Quartal 99</div>
<div class="li" style="left:2px;top:79px">52</div>
<div class="li" style="left:2px;top:92px">31.12.99 13:37</div>
<div class="li" style="left:2px;top:105px">31.12.1999 13:37:46</div>
<div class="li" style="left:2px;top:118px">1999-12-31 13:37:46</div>
</div>
<div style="left:482px;top:194px;width:16px;height:140px;background:#e9e7e2"></div>
<div class="sb" style="left:482px;top:194px;width:16px;height:16px"></div>
<svg style="left:486px;top:200px" width="7" height="4"><polygon points="0,4 7,4 3.5,0" fill="#000"/></svg>
<div class="sb" style="left:482px;top:273px;width:16px;height:46px"></div>
<div class="sb" style="left:482px;top:319px;width:16px;height:16px"></div>
<svg style="left:486px;top:325px" width="7" height="4"><polygon points="0,0 7,0 3.5,4" fill="#a0a0a0"/></svg>
<div class="sunken" style="left:512px;top:192px;width:199px;height:21px"></div>
<div class="t" style="left:514px;top:197px;">Standard - Deutsch (Deutschland)</div>
<div class="sb" style="left:693px;top:194px;width:16px;height:17px"></div>
<svg style="left:697px;top:200px" width="7" height="4"><polygon points="0,0 7,0 3.5,4" fill="#000"/></svg>
<div style="left:512px;top:296px;width:199px;height:40px;background:#fff;border-right:1px solid #808080;border-bottom:1px solid #808080"></div>
<div class="t" style="left:512px;top:311px;">01.Jan</div>
<div class="t" style="left:141px;top:344px;font-weight:bold;font-size:12px;color:#8c8a86;text-shadow:1px 1px #fff">Optionen</div>
<div class="t dis" style="left:100px;top:367px;width:148px;text-align:right"><u>N</u>achkommastellen:</div>
<div class="t dis" style="left:100px;top:392px;width:148px;text-align:right">Führende <u>N</u>ullen:</div>
<div class="sunken" style="left:262px;top:362px;width:55px;height:21px;background:#fff"></div>
<div class="sb" style="left:300px;top:364px;width:15px;height:8px"></div>
<div class="sb" style="left:300px;top:372px;width:15px;height:9px"></div>
<svg style="left:305px;top:367px" width="5" height="3"><polygon points="0,3 5,3 2.5,0" fill="#808080"/></svg>
<svg style="left:305px;top:375px" width="5" height="3"><polygon points="0,0 5,0 2.5,3" fill="#808080"/></svg>
<div class="sunken" style="left:262px;top:389px;width:55px;height:21px;background:#fff"></div>
<div class="sb" style="left:300px;top:391px;width:15px;height:8px"></div>
<div class="sb" style="left:300px;top:399px;width:15px;height:9px"></div>
<svg style="left:305px;top:394px" width="5" height="3"><polygon points="0,3 5,3 2.5,0" fill="#808080"/></svg>
<svg style="left:305px;top:402px" width="5" height="3"><polygon points="0,0 5,0 2.5,3" fill="#808080"/></svg>
<div style="left:329px;top:367px;width:12px;height:12px;background:#d4d0c8;border:1px solid;border-color:#808080 #fff #fff #808080;box-shadow:inset 1px 1px #404040,inset -1px -1px #d4d0c8"></div>
<div class="t dis" style="left:345px;top:367px">Negativ in <u>R</u>ot</div>
<div style="left:329px;top:389px;width:12px;height:12px;background:#d4d0c8;border:1px solid;border-color:#808080 #fff #fff #808080;box-shadow:inset 1px 1px #404040,inset -1px -1px #d4d0c8"></div>
<div class="t dis" style="left:345px;top:389px"><u>T</u>ausendertrennzeichen</div>
<div class="t" style="left:141px;top:417px;font-weight:bold;font-size:12px;">Format-<u>C</u>ode</div>
<div class="sunken" style="left:153px;top:438px;width:420px;height:22px"></div>
<div class="t" style="left:155px;top:443px;">TT.MMM</div>
<div class="raised" style="left:579px;top:435px;width:40px;height:28px;box-shadow:inset -1px -1px #808080"></div>
<div class="raised" style="left:625px;top:435px;width:40px;height:28px;box-shadow:inset -1px -1px #808080"></div>
<div class="raised" style="left:671px;top:435px;width:40px;height:28px;box-shadow:inset -1px -1px #808080"></div>
<svg style="left:590px;top:441px" width="18" height="16" viewBox="0 0 18 16"><path d="M4 10l4 4 8-9" fill="none" stroke="#fff" stroke-width="1.4"/><path d="M3 9l4 4 8-9" fill="none" stroke="#b8b5ae" stroke-width="1.4"/></svg>
<svg style="left:637px;top:439px" width="16" height="20" viewBox="0 0 16 20"><path d="M5 3.5h6M5 6.5h6M5 9.5h6" stroke="#b8b5ae"/><circle cx="8" cy="14" r="2.5" fill="none" stroke="#b8b5ae" stroke-width="1.2"/></svg>
<svg style="left:683px;top:441px" width="16" height="16" viewBox="0 0 16 16"><path d="M4 4l10 10M14 4L4 14" stroke="#fff" stroke-width="1.2"/><path d="M3 3l10 10M13 3L3 13" stroke="#b8b5ae" stroke-width="1.2"/></svg>
<div class="t" style="left:152px;top:470px;">Benutzerdefiniert</div>
<div class="raised" style="left:137px;top:508px;width:85px;height:27px"></div>
<div class="t" style="left:137px;top:515px;width:85px;text-align:center"><u>H</u>ilfe</div>
<div class="raised" style="left:448px;top:508px;width:84px;height:27px"></div>
<div class="t" style="left:448px;top:515px;width:84px;text-align:center"><u>Z</u>urück</div>
<div style="left:538px;top:508px;width:86px;height:27px;border:1px solid #000"></div>
<div class="raised" style="left:539px;top:509px;width:84px;height:25px"></div>
<div class="t" style="left:538px;top:515px;width:86px;text-align:center"><u>O</u>K</div>
<div class="raised" style="left:630px;top:508px;width:85px;height:27px"></div>
<div class="t" style="left:630px;top:515px;width:85px;text-align:center"><u>A</u>bbrechen</div>
</body></html>
